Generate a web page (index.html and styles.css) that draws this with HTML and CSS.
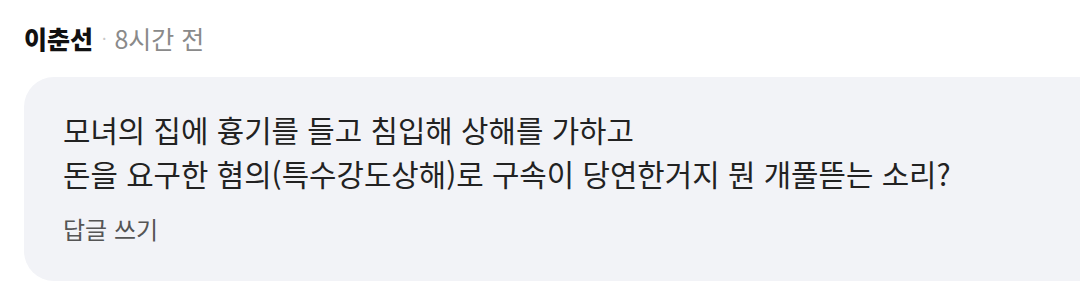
FILE: index.html
```html
<!DOCTYPE html>
<html lang="ko">
<head>
    <meta charset="UTF-8">
    <meta name="viewport" content="width=device-width, initial-scale=1.0">
    <title>댓글</title>
    <link rel="stylesheet" href="styles.css">
</head>
<body>
    <div class="comment">
        <div class="comment-head">
            <span class="author">이춘선</span>
            <span class="dot">·</span>
            <span class="time">8시간 전</span>
        </div>
        <div class="bubble">
            <p class="text">모녀의 집에 흉기를 들고 침입해 상해를 가하고<br>돈을 요구한 혐의(특수강도상해)로 구속이 당연한거지 뭔 개풀뜯는 소리?</p>
            <a href="#" class="reply">답글 쓰기</a>
        </div>
    </div>
</body>
</html>
```

FILE: styles.css
```css
body {
    margin: 0;
    padding: 0;
    background: #fff;
    font-family: "Noto Sans CJK KR", "Noto Sans", sans-serif;
}

.comment {
    padding: 20px 0 0 24px;
}

.comment-head {
    display: flex;
    align-items: center;
    height: 36px;
}

.author {
    font-size: 25px;
    font-weight: 900;
    color: #111;
}

.dot {
    font-size: 16px;
    color: #c8c8c8;
    margin: 0 8px 0 9px;
}

.time {
    font-size: 25px;
    color: #8a8a8a;
}

.bubble {
    margin-top: 21px;
    margin-right: -40px;
    background-color: #f2f3f7;
    border-radius: 30px;
    padding: 30px 0 37px 39px;
}

.text {
    margin: 0;
    font-size: 29.8px;
    line-height: 44px;
    color: #222;
}

.reply {
    display: block;
    margin-top: 19px;
    font-size: 24px;
    line-height: 30px;
    color: #555;
    text-decoration: none;
}
```
